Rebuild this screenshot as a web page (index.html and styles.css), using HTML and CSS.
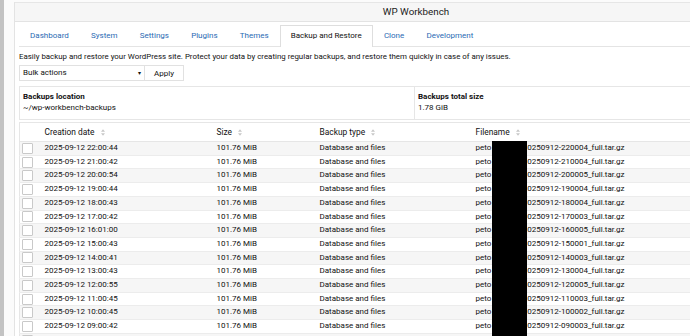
FILE: index.html
```html
<!DOCTYPE html>
<html lang="en">
<head>
    <meta charset="UTF-8">
    <meta name="viewport" content="width=device-width, initial-scale=1.0">
    <title>WP Workbench</title>
    <link rel="stylesheet" href="styles.css">
</head>
<body>
    <div class="shell">
        <div class="edge"></div>
        <div class="frame">
            <div class="titlebar">WP Workbench</div>
            <div class="content">
                <nav class="tabs">
                    <a class="tab">Dashboard</a>
                    <a class="tab">System</a>
                    <a class="tab">Settings</a>
                    <a class="tab">Plugins</a>
                    <a class="tab">Themes</a>
                    <a class="tab tab-active">Backup and Restore</a>
                    <a class="tab">Clone</a>
                    <a class="tab">Development</a>
                </nav>

                <p class="intro">Easily backup and restore your WordPress site. Protect your data by creating regular backups, and restore them quickly in case of any issues.</p>

                <div class="bulk">
                    <div class="bulk-select">Bulk actions <span class="caret">&#9662;</span></div>
                    <button class="bulk-apply">Apply</button>
                </div>

                <!-- Summary boxes -->
                <div class="stats">
                    <div class="stat stat-location">
                        <strong>Backups location</strong>
                        <span>~/wp-workbench-backups</span>
                    </div>
                    <div class="stat">
                        <strong>Backups total size</strong>
                        <span>1.78 GiB</span>
                    </div>
                </div>

                <!-- Backups table -->
                <div class="table-wrap">
                    <table class="backups">
                        <colgroup>
                            <col class="c-check">
                            <col class="c-date">
                            <col class="c-size">
                            <col class="c-type">
                            <col>
                        </colgroup>
                        <thead>
                            <tr>
                                <th></th>
                                <th>Creation date <svg class="sort" viewBox="0 0 5 8"><path d="M2.5 0 5 3H0z M2.5 8 0 5h5z"/></svg></th>
                                <th>Size <svg class="sort" viewBox="0 0 5 8"><path d="M2.5 0 5 3H0z M2.5 8 0 5h5z"/></svg></th>
                                <th>Backup type <svg class="sort" viewBox="0 0 5 8"><path d="M2.5 0 5 3H0z M2.5 8 0 5h5z"/></svg></th>
                                <th>Filename <svg class="sort" viewBox="0 0 5 8"><path d="M2.5 0 5 3H0z M2.5 8 0 5h5z"/></svg></th>
                            </tr>
                        </thead>
                        <tbody>
                            <tr><td><span class="check"></span></td><td>2025-09-12 22:00:44</td><td>101.76 MiB</td><td>Database and files</td><td>peto<span class="gap"></span>0250912-220004_full.tar.gz</td></tr>
                            <tr><td><span class="check"></span></td><td>2025-09-12 21:00:42</td><td>101.76 MiB</td><td>Database and files</td><td>peto<span class="gap"></span>0250912-210004_full.tar.gz</td></tr>
                            <tr><td><span class="check"></span></td><td>2025-09-12 20:00:54</td><td>101.76 MiB</td><td>Database and files</td><td>peto<span class="gap"></span>0250912-200005_full.tar.gz</td></tr>
                            <tr><td><span class="check"></span></td><td>2025-09-12 19:00:44</td><td>101.76 MiB</td><td>Database and files</td><td>peto<span class="gap"></span>0250912-190004_full.tar.gz</td></tr>
                            <tr><td><span class="check"></span></td><td>2025-09-12 18:00:43</td><td>101.76 MiB</td><td>Database and files</td><td>peto<span class="gap"></span>0250912-180004_full.tar.gz</td></tr>
                            <tr><td><span class="check"></span></td><td>2025-09-12 17:00:42</td><td>101.76 MiB</td><td>Database and files</td><td>peto<span class="gap"></span>0250912-170003_full.tar.gz</td></tr>
                            <tr><td><span class="check"></span></td><td>2025-09-12 16:01:00</td><td>101.76 MiB</td><td>Database and files</td><td>peto<span class="gap"></span>0250912-160005_full.tar.gz</td></tr>
                            <tr><td><span class="check"></span></td><td>2025-09-12 15:00:43</td><td>101.76 MiB</td><td>Database and files</td><td>peto<span class="gap"></span>0250912-150001_full.tar.gz</td></tr>
                            <tr><td><span class="check"></span></td><td>2025-09-12 14:00:41</td><td>101.76 MiB</td><td>Database and files</td><td>peto<span class="gap"></span>0250912-140003_full.tar.gz</td></tr>
                            <tr><td><span class="check"></span></td><td>2025-09-12 13:00:43</td><td>101.76 MiB</td><td>Database and files</td><td>peto<span class="gap"></span>0250912-130004_full.tar.gz</td></tr>
                            <tr><td><span class="check"></span></td><td>2025-09-12 12:00:55</td><td>101.76 MiB</td><td>Database and files</td><td>peto<span class="gap"></span>0250912-120005_full.tar.gz</td></tr>
                            <tr><td><span class="check"></span></td><td>2025-09-12 11:00:45</td><td>101.76 MiB</td><td>Database and files</td><td>peto<span class="gap"></span>0250912-110003_full.tar.gz</td></tr>
                            <tr><td><span class="check"></span></td><td>2025-09-12 10:00:45</td><td>101.76 MiB</td><td>Database and files</td><td>peto<span class="gap"></span>0250912-100002_full.tar.gz</td></tr>
                            <tr><td><span class="check"></span></td><td>2025-09-12 09:00:42</td><td>101.76 MiB</td><td>Database and files</td><td>peto<span class="gap"></span>0250912-090003_full.tar.gz</td></tr>
                            <tr><td><span class="check"></span></td><td></td><td></td><td></td><td></td></tr>
                        </tbody>
                    </table>
                    <div class="redact"></div>
                </div>
            </div>
        </div>
    </div>
</body>
</html>
```

FILE: styles.css
```css
body {
    margin: 0;
    padding: 0;
    background: #fbfbfb;
    font-family: Roboto, "Liberation Sans", sans-serif;
    font-size: 8px;
    color: #111;
    overflow: hidden;
}

/* Outer shell */
.shell {
    display: flex;
    width: 690px;
    height: 336px;
    overflow: hidden;
}

.edge {
    flex: 0 0 4px;
    background: #c3c3c3;
}

.frame {
    flex: 0 0 802px;
    margin: 2px 0 0 10px;
    border-left: 1px solid #e3e3e3;
    background: #fff;
}

/* Title bar */
.titlebar {
    height: 18px;
    line-height: 18px;
    text-align: center;
    font-size: 9.8px;
    color: #1a1a1a;
    background: #f6f6f6;
    border-top: 1px solid #e6e6e6;
    border-bottom: 1px solid #e3e3e3;
}

.content {
    padding: 0 4px;
}

/* Tabs */
.tabs {
    display: flex;
    margin-top: 3px;
    border-bottom: 1px solid #e4e4e4;
}

.tab {
    padding: 0 10.1px;
    height: 20px;
    line-height: 20px;
    color: #2a6ab3;
    border: 1px solid transparent;
    border-bottom: none;
}

.tab-active {
    color: #111;
    background: #fff;
    border-color: #dedede;
    margin-bottom: -1px;
    height: 21px;
}

.intro {
    margin: 4px 0 2px;
    line-height: 12px;
    font-size: 7.9px;
}

/* Bulk actions */
.bulk {
    display: flex;
}

.bulk-select {
    width: 118px;
    height: 14px;
    line-height: 14px;
    padding: 0 3px 0 3px;
    border: 1px solid #e1e1e1;
    display: flex;
    justify-content: space-between;
}

.caret {
    font-size: 6px;
}

.bulk-apply {
    font: inherit;
    color: #111;
    width: 39px;
    height: 16px;
    padding: 0;
    background: #fff;
    border: 1px solid #e1e1e1;
    border-left: none;
}

/* Summary */
.stats {
    display: flex;
    margin-top: 5px;
    border: 1px solid #e6e6e6;
    border-right: none;
    height: 32px;
}

.stat {
    display: flex;
    flex-direction: column;
    padding: 4px 3px 0;
    line-height: 11px;
    flex: 1;
}

.stat-location {
    flex: 0 0 388px;
    border-right: 1px solid #e6e6e6;
}

.stat strong {
    font-weight: 700;
}

/* Table */
.table-wrap {
    position: relative;
    margin-top: 2px;
}

.backups {
    width: 100%;
    table-layout: fixed;
    border-collapse: collapse;
    border-top: 1px solid #e6e6e6;
    border-left: 1px solid #e6e6e6;
}

.c-check { width: 21px; }
.c-date { width: 172px; }
.c-size { width: 103px; }
.c-type { width: 156px; }

.backups th {
    height: 18px;
    text-align: left;
    font-weight: 400;
    font-size: 8.4px;
    padding: 0 4px;
    border-bottom: 1px solid #e6e6e6;
    white-space: nowrap;
}

.sort {
    width: 4px;
    height: 7px;
    margin-left: 4px;
    fill: #c8c8c8;
    vertical-align: -1px;
}

.backups td {
    height: 12.7px;
    padding: 0 4px;
    line-height: 12.7px;
    border-bottom: 1px solid #ececec;
    white-space: nowrap;
}

.backups tbody tr:nth-child(odd) td {
    background: #f6f6f6;
}

.backups td:first-child {
    padding: 0 0 0 2px;
}

.check {
    display: block;
    width: 9px;
    height: 9px;
    border: 1px solid #c9c9c9;
    border-radius: 1px;
    background: #fff;
}

.gap {
    display: inline-block;
    width: 36px;
}

/* Redaction overlay */
.redact {
    position: absolute;
    left: 473px;
    top: 19px;
    width: 35px;
    height: 230px;
    background: #000;
}
```
